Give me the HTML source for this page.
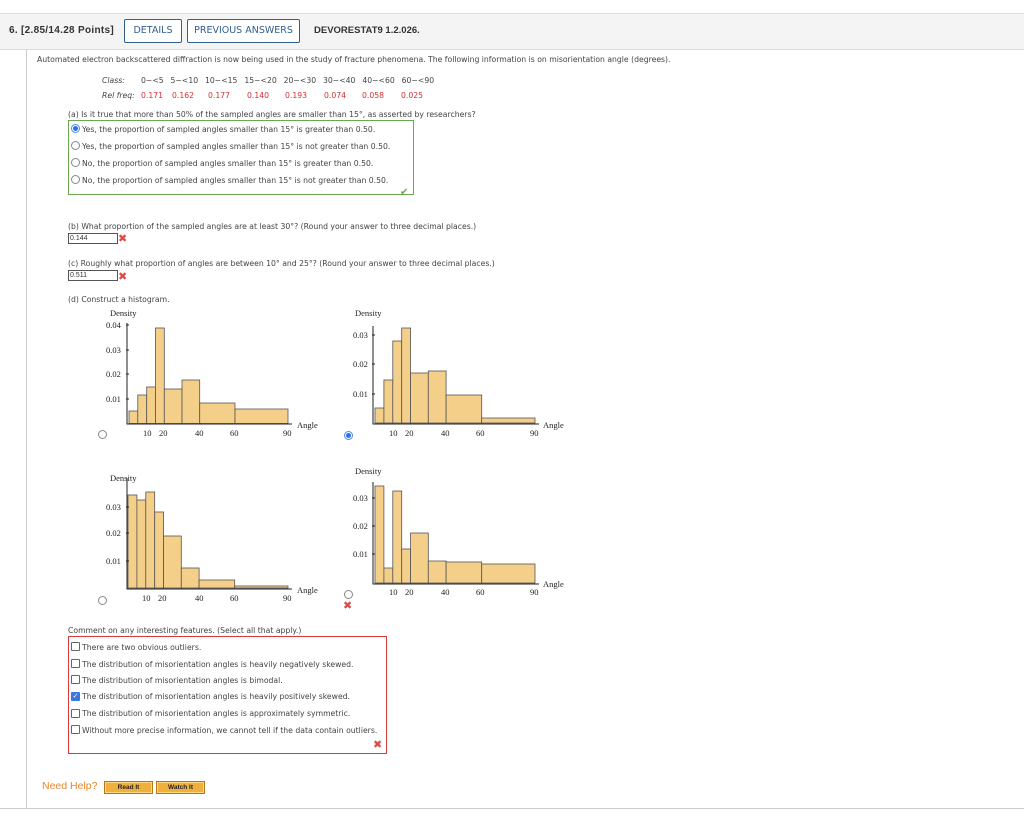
<!DOCTYPE html>
<html><head><meta charset="utf-8"><style>
body{margin:0;width:1024px;height:839px;background:#fff;position:relative;overflow:hidden;font-family:"DejaVu Sans","Liberation Sans",sans-serif;color:#333}
.a{position:absolute;white-space:nowrap}
.t{font-size:7.7px;color:#444}
.hdr{position:absolute;left:0;top:13px;width:1024px;height:35px;background:#f4f4f4;border-top:1px solid #ddd;border-bottom:1px solid #ddd}
.btn{position:absolute;top:19px;height:22px;border:1.5px solid #2f5f8f;border-radius:2px;background:#fff;color:#2f5f8f;font-size:9.5px;line-height:22px;text-align:center;box-sizing:content-box}
.red{color:#d03030}
.rad{position:absolute;width:7px;height:7px;border:1px solid #888;border-radius:50%;background:#fff}
.chk{position:absolute;width:7px;height:7px;border:1px solid #666;border-radius:1px;background:#fff}
.inp{position:absolute;width:47px;height:9px;border:1px solid #555;font-family:"Liberation Sans",sans-serif;font-size:7px;line-height:9px;padding-left:1px;color:#333}
.x{position:absolute;color:#e04848;font-size:11px;font-weight:bold}
.hb{position:absolute;top:781px;height:11px;background:#f0b040;border:1px solid #b07818;box-shadow:inset 0 0 0 1px #ffd680;font-family:"Liberation Sans",sans-serif;font-size:6.5px;font-weight:bold;line-height:11px;text-align:center;color:#222}
</style></head><body>
<div class="hdr"></div>
<div class="a" style="left:9px;top:25px;font-family:'Liberation Sans',sans-serif;font-size:10px;letter-spacing:0.3px;font-weight:bold;color:#333">6. [2.85/14.28 Points]</div>
<div class="btn" style="left:124px;width:56px">DETAILS</div>
<div class="btn" style="left:187px;width:111px">PREVIOUS ANSWERS</div>
<div class="a" style="left:314px;top:25px;font-family:'Liberation Sans',sans-serif;font-size:9.5px;font-weight:bold;color:#333">DEVORESTAT9 1.2.026.</div>
<div class="a" style="left:26px;top:49px;width:1px;height:759px;background:#ccc"></div>
<div class="a" style="left:0;top:808px;width:1024px;height:1px;background:#ccc"></div>

<div class="a t" style="left:37px;top:55px">Automated electron backscattered diffraction is now being used in the study of fracture phenomena. The following information is on misorientation angle (degrees).</div>
<div class="a t" style="left:102px;top:76px"><i>Class:</i></div>
<div class="a t" style="left:141px;top:76px;word-spacing:1px">0−&lt;5&nbsp; 5−&lt;10&nbsp; 10−&lt;15&nbsp; 15−&lt;20&nbsp; 20−&lt;30&nbsp; 30−&lt;40&nbsp; 40−&lt;60&nbsp; 60−&lt;90</div>
<div class="a t" style="left:102px;top:91px"><i>Rel freq:</i></div>
<div class="a t red" style="left:141px;top:91px">0.171</div>
<div class="a t red" style="left:172px;top:91px">0.162</div>
<div class="a t red" style="left:208px;top:91px">0.177</div>
<div class="a t red" style="left:247px;top:91px">0.140</div>
<div class="a t red" style="left:285px;top:91px">0.193</div>
<div class="a t red" style="left:324px;top:91px">0.074</div>
<div class="a t red" style="left:362px;top:91px">0.058</div>
<div class="a t red" style="left:401px;top:91px">0.025</div>

<div class="a t" style="left:68px;top:110px">(a) Is it true that more than 50% of the sampled angles are smaller than 15°, as asserted by researchers?</div>
<div class="a" style="left:68px;top:120px;width:344px;height:73px;border:1.5px solid #6aa84f"></div>
<div class="rad" style="left:71px;top:124px;border-color:#4a8ae8;background:radial-gradient(#2a6ef0 45%,#fff 55%)"></div>
<div class="a t" style="left:82px;top:125px">Yes, the proportion of sampled angles smaller than 15° is greater than 0.50.</div>
<div class="rad" style="left:71px;top:141px"></div>
<div class="a t" style="left:82px;top:142px">Yes, the proportion of sampled angles smaller than 15° is not greater than 0.50.</div>
<div class="rad" style="left:71px;top:158px"></div>
<div class="a t" style="left:82px;top:159px">No, the proportion of sampled angles smaller than 15° is greater than 0.50.</div>
<div class="rad" style="left:71px;top:175px"></div>
<div class="a t" style="left:82px;top:176px">No, the proportion of sampled angles smaller than 15° is not greater than 0.50.</div>
<div class="a" style="left:400px;top:187px;color:#6aa84f;font-size:10px">✔</div>

<div class="a t" style="left:68px;top:222px">(b) What proportion of the sampled angles are at least 30°? (Round your answer to three decimal places.)</div>
<div class="inp" style="left:68px;top:233px">0.144</div>
<div class="x" style="left:118px;top:232px">✖</div>
<div class="a t" style="left:68px;top:259px">(c) Roughly what proportion of angles are between 10° and 25°? (Round your answer to three decimal places.)</div>
<div class="inp" style="left:68px;top:270px">0.511</div>
<div class="x" style="left:118px;top:270px">✖</div>
<div class="a t" style="left:68px;top:295px">(d) Construct a histogram.</div>

<svg class="a" style="left:0;top:0" width="1024" height="839" font-family="Liberation Serif,serif" font-size="8.5" fill="#222">
<g fill="#f4cf8a" stroke="#555" stroke-width="0.8">
<rect x="129" y="411" width="8.8" height="12.5"/><rect x="137.8" y="395" width="8.9" height="28.5"/><rect x="146.7" y="387" width="8.8" height="36.5"/><rect x="155.5" y="328" width="8.8" height="95.5"/><rect x="164.3" y="389" width="17.7" height="34.5"/><rect x="182" y="380" width="17.7" height="43.5"/><rect x="199.7" y="403" width="35.3" height="20.5"/><rect x="235" y="409" width="53" height="14.5"/>
<rect x="375" y="408" width="8.9" height="15"/><rect x="383.9" y="380" width="8.9" height="43"/><rect x="392.8" y="341" width="8.9" height="82"/><rect x="401.7" y="328" width="8.9" height="95"/><rect x="410.6" y="373" width="17.7" height="50"/><rect x="428.3" y="371" width="17.8" height="52"/><rect x="446.1" y="395" width="35.6" height="28"/><rect x="481.7" y="418" width="53.3" height="5"/>
<rect x="128" y="495" width="8.9" height="93"/><rect x="136.9" y="500" width="8.9" height="88"/><rect x="145.8" y="492" width="8.9" height="96"/><rect x="154.7" y="512" width="8.9" height="76"/><rect x="163.6" y="536" width="17.7" height="52"/><rect x="181.3" y="568" width="17.8" height="20"/><rect x="199.1" y="580" width="35.6" height="8"/><rect x="234.7" y="586" width="53.3" height="2"/>
<rect x="375" y="486" width="8.9" height="97"/><rect x="383.9" y="568" width="8.9" height="15"/><rect x="392.8" y="491" width="8.9" height="92"/><rect x="401.7" y="549" width="8.9" height="34"/><rect x="410.6" y="533" width="17.7" height="50"/><rect x="428.3" y="561" width="17.8" height="22"/><rect x="446.1" y="562" width="35.6" height="21"/><rect x="481.7" y="564" width="53.3" height="19"/>
</g>
<g stroke="#222" stroke-width="1" fill="none">
<path d="M127 323V424H292"/><path d="M126 325h3M126 350h3M126 374h3M126 399h3"/>
<path d="M373 326V424H539"/><path d="M372 335h3M372 364h3M372 394h3"/>
<path d="M127 478V589H292"/><path d="M126 507h3M126 533h3M126 561h3"/>
<path d="M373 482V584H539"/><path d="M372 498h3M372 526h3M372 554h3"/>
</g>
<text x="110" y="316">Density</text>
<text x="106" y="328">0.04</text><text x="106" y="353">0.03</text><text x="106" y="377">0.02</text><text x="106" y="402">0.01</text>
<text x="143" y="436">10</text><text x="159" y="436">20</text><text x="195" y="436">40</text><text x="230" y="436">60</text><text x="283" y="436">90</text><text x="297" y="428">Angle</text>
<text x="355" y="316">Density</text>
<text x="353" y="338">0.03</text><text x="353" y="367">0.02</text><text x="353" y="397">0.01</text>
<text x="389" y="436">10</text><text x="405" y="436">20</text><text x="441" y="436">40</text><text x="476" y="436">60</text><text x="530" y="436">90</text><text x="543" y="428">Angle</text>
<text x="110" y="481">Density</text>
<text x="106" y="510">0.03</text><text x="106" y="536">0.02</text><text x="106" y="564">0.01</text>
<text x="142" y="601">10</text><text x="158" y="601">20</text><text x="195" y="601">40</text><text x="230" y="601">60</text><text x="283" y="601">90</text><text x="297" y="593">Angle</text>
<text x="355" y="474">Density</text>
<text x="353" y="501">0.03</text><text x="353" y="529">0.02</text><text x="353" y="557">0.01</text>
<text x="389" y="595">10</text><text x="405" y="595">20</text><text x="441" y="595">40</text><text x="476" y="595">60</text><text x="530" y="595">90</text><text x="543" y="587">Angle</text>
</svg>
<div class="rad" style="left:98px;top:430px"></div>
<div class="rad" style="left:344px;top:431px;border-color:#4a8ae8;background:radial-gradient(#2a6ef0 45%,#fff 55%)"></div>
<div class="rad" style="left:98px;top:596px"></div>
<div class="rad" style="left:344px;top:590px"></div>
<div class="x" style="left:343px;top:599px">✖</div>

<div class="a t" style="left:68px;top:626px">Comment on any interesting features. (Select all that apply.)</div>
<div class="a" style="left:68px;top:636px;width:317px;height:116px;border:1.5px solid #d83a3a"></div>
<div class="chk" style="left:71px;top:642px"></div><div class="a t" style="left:82px;top:643px">There are two obvious outliers.</div>
<div class="chk" style="left:71px;top:659px"></div><div class="a t" style="left:82px;top:660px">The distribution of misorientation angles is heavily negatively skewed.</div>
<div class="chk" style="left:71px;top:675px"></div><div class="a t" style="left:82px;top:676px">The distribution of misorientation angles is bimodal.</div>
<div class="chk" style="left:71px;top:692px;background:#3a78e0;border-color:#3a78e0;color:#fff;font-size:7px;line-height:7px;text-align:center">✓</div><div class="a t" style="left:82px;top:692px">The distribution of misorientation angles is heavily positively skewed.</div>
<div class="chk" style="left:71px;top:709px"></div><div class="a t" style="left:82px;top:709px">The distribution of misorientation angles is approximately symmetric.</div>
<div class="chk" style="left:71px;top:725px"></div><div class="a t" style="left:82px;top:726px">Without more precise information, we cannot tell if the data contain outliers.</div>
<div class="x" style="left:373px;top:738px">✖</div>

<div class="a" style="left:42px;top:780px;font-family:'Liberation Sans',sans-serif;font-size:10.5px;color:#e8872a">Need Help?</div>
<div class="hb" style="left:104px;width:47px">Read It</div>
<div class="hb" style="left:156px;width:47px">Watch It</div>
</body></html>
